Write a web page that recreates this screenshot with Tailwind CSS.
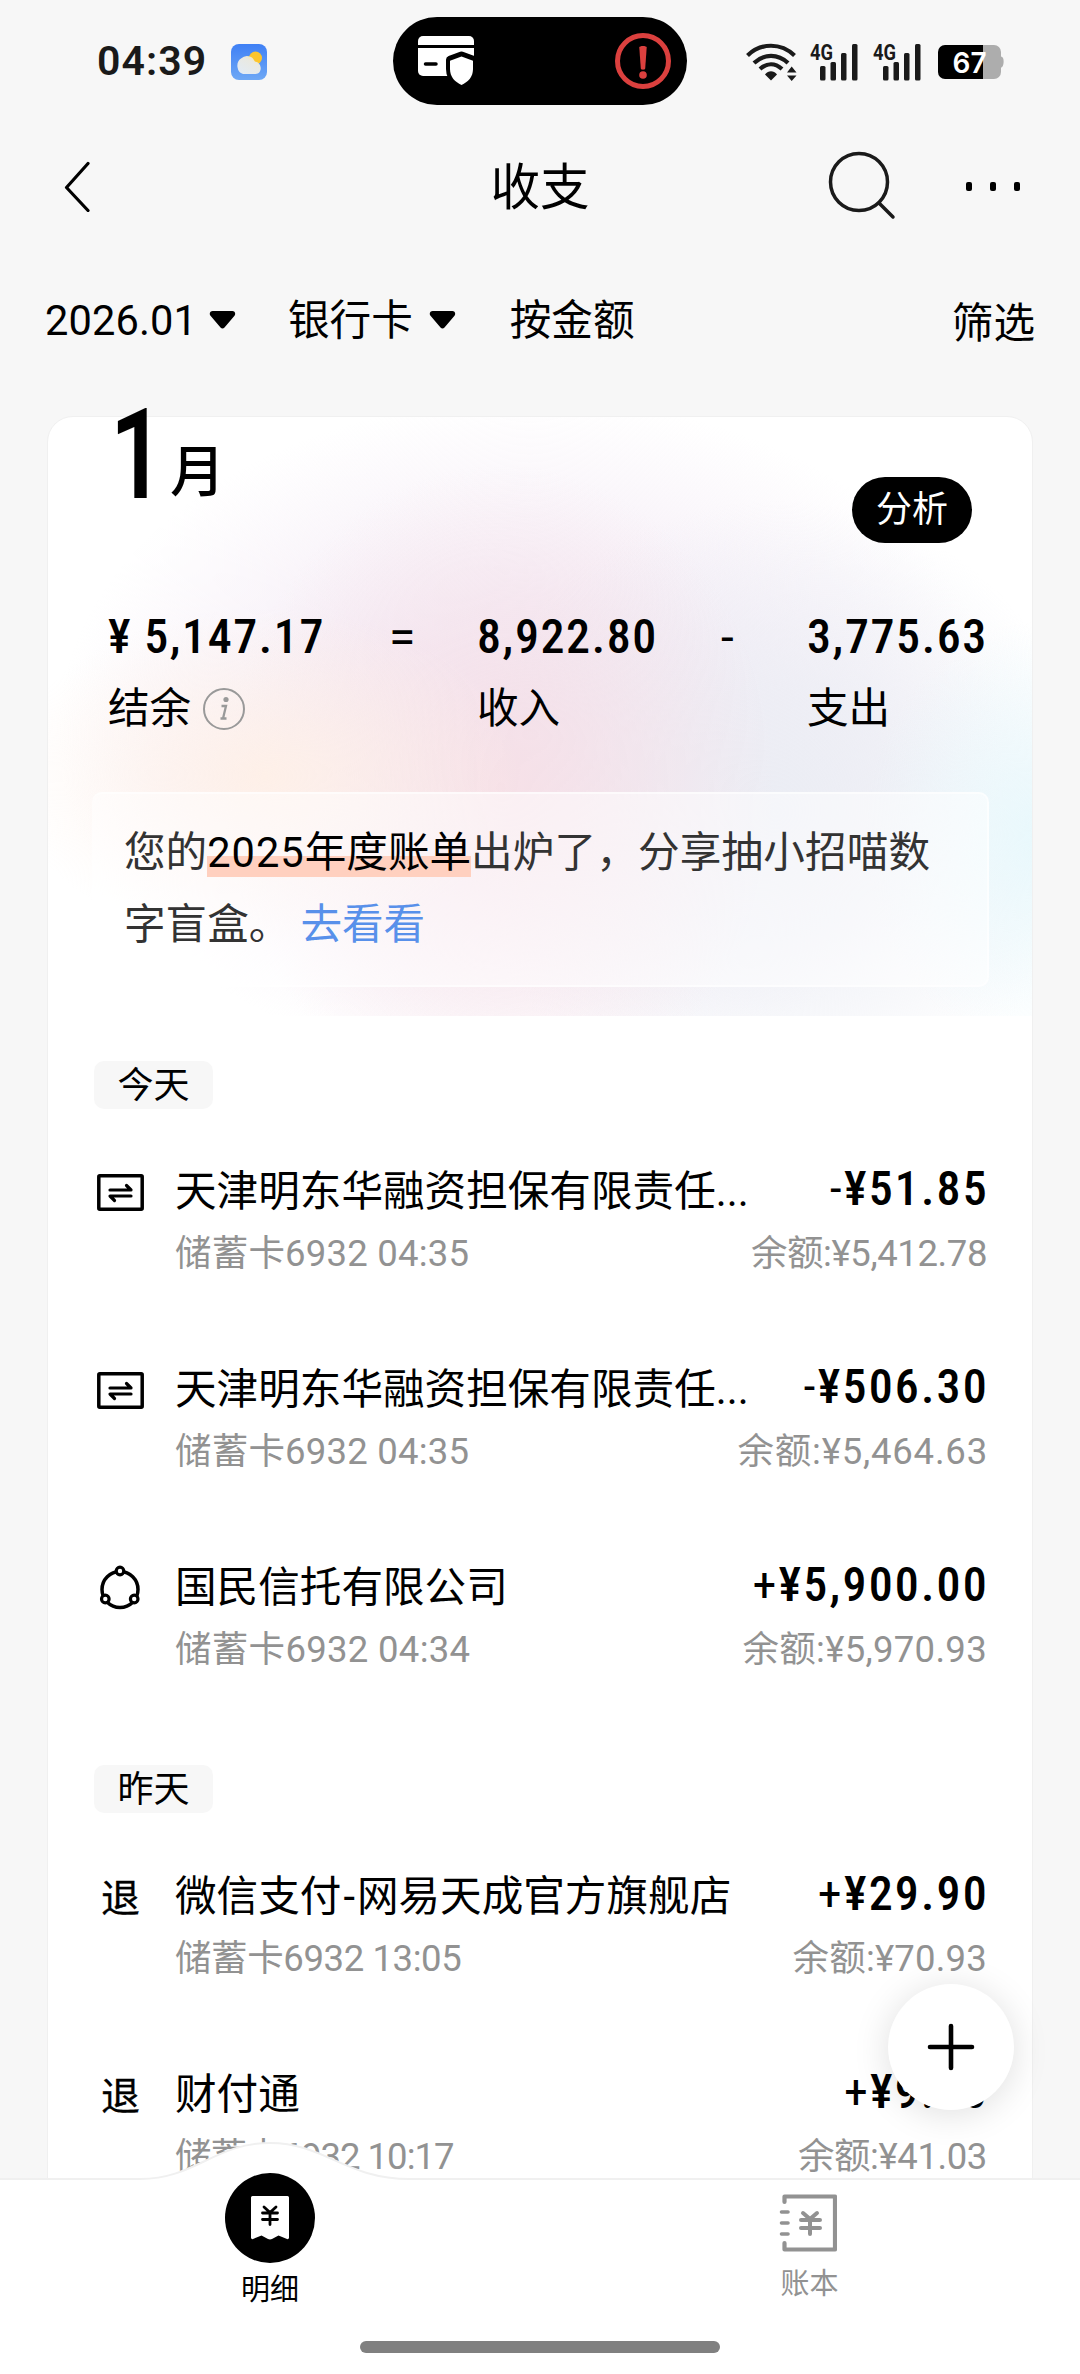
<!DOCTYPE html>
<html lang="zh-CN">
<head>
<meta charset="utf-8">
<title>收支</title>
<script src="https://cdn.jsdelivr.net/npm/@tailwindcss/browser@4"></script>
</head>
<body class="bg-[#f7f7f7]">
<div class="relative flex h-[2374px] w-[1080px] flex-col overflow-hidden bg-[#f7f7f7] font-['Roboto','Noto_Sans_CJK_SC',sans-serif] text-[41.6px] whitespace-nowrap text-black">

  <!-- Status bar -->
  <header class="relative flex h-[124px] shrink-0 items-center pr-[76px] pl-[97px]">
    <span class="w-[134px] pb-[3px] text-[41px] leading-[46px] font-semibold tracking-[1.1px] text-[#1a1a1a]">04:39</span>
    <svg class="h-9 w-9" viewBox="0 0 36 36">
      <defs>
        <linearGradient id="sky" x1="0" y1="0" x2="0" y2="1"><stop offset="0" stop-color="#3f80f5"/><stop offset="1" stop-color="#6ea8f5"/></linearGradient>
        <linearGradient id="cloud" x1="1" y1="0" x2="0.3" y2="1"><stop offset="0" stop-color="#fbe79a"/><stop offset="0.4" stop-color="#e9e9e2"/><stop offset="1" stop-color="#e3ebf3"/></linearGradient>
      </defs>
      <rect width="36" height="36" rx="8" fill="url(#sky)"/>
      <circle cx="24.500" cy="14" r="6.500" fill="#fcc52c"/>
      <path d="M12 30a7.500 8.500 0 0 1-2-15.500 9 9 0 0 1 10-1.500c3 1.500 3 4 4.500 4.800 7 1.200 7 12.200 0 12.200z" fill="url(#cloud)"/>
    </svg>

    <div class="absolute top-[17px] left-[393px] flex h-[88px] w-[294px] items-center justify-between rounded-full bg-black pr-[15px] pl-[25px]">
      <svg class="h-[50px] w-[57px]" viewBox="0 0 57 50">
        <path d="M5 0H51a5 5 0 0 1 5 5V9H0V5A5 5 0 0 1 5 0z" fill="#fff"/>
        <path d="M0 12H56V35a5 5 0 0 1-5 5H5a5 5 0 0 1-5-5z" fill="#fff"/>
        <path d="M7.500 28H18" stroke="#000" stroke-width="3.500" stroke-linecap="round"/>
        <path d="M43.500 19.500 55 23.800V33c0 8-5 13-11.500 16C37 46 32 41 32 33V23.800z" fill="#fff" stroke="#000" stroke-width="8" stroke-linejoin="round"/>
        <path d="M43.500 20.500 55 24.800V33c0 8-5 13-11.500 16C37 46 32 41 32 33V24.800z" fill="#fff"/>
      </svg>
      <svg class="h-[58px] w-[58px]" viewBox="0 0 58 58">
        <circle cx="29" cy="29" r="25.500" fill="none" stroke="#db403e" stroke-width="5"/>
        <path d="M25.300 15.500c0-2 7.400-2 7.400 0L31.200 36.500c-.2 1.600-4.200 1.600-4.400 0z" fill="#db403e"/>
        <circle cx="29" cy="43" r="3.800" fill="#db403e"/>
      </svg>
    </div>

    <div class="ml-auto flex items-center text-[#1a1a1a]">
      <svg class="h-[38px] w-[51px]" viewBox="0 0 51 38" fill="none" stroke="currentColor" stroke-width="4.200">
        <path d="M1.500 12.500C15-.5 35-.5 48.500 12.500"/>
        <path d="M8 20C18 10.500 32 10.500 42 20"/>
        <path d="M14 26C21 19.700 29 19.700 36 26"/>
        <path d="M19 31.500C22.500 27.300 27.500 27.300 31 31.500L25 37.500z" fill="currentColor" stroke="none"/>
        <path d="M41 29.500 45.700 23.500 50.500 29.500zM41 32.500 45.700 38 50.500 32.500z" fill="currentColor" stroke="none"/>
      </svg>
      <svg class="ml-[13px] h-[38px] w-[49px] overflow-visible" viewBox="0 0 49 38" fill="currentColor">
        <text x="0" y="16.500" font-family="Roboto" font-weight="700" font-size="22" textLength="23" lengthAdjust="spacingAndGlyphs">4G</text>
        <rect x="10" y="23" width="5.500" height="14.500" rx="1.500"/><rect x="20.500" y="19" width="5.500" height="18.500" rx="1.500"/><rect x="31" y="10" width="5.500" height="27.500" rx="1.500"/><rect x="42" y="1" width="5.500" height="36.500" rx="1.500"/>
      </svg>
      <svg class="ml-[14px] h-[38px] w-[49px] overflow-visible" viewBox="0 0 49 38" fill="currentColor">
        <text x="0" y="16.500" font-family="Roboto" font-weight="700" font-size="22" textLength="23" lengthAdjust="spacingAndGlyphs">4G</text>
        <rect x="10" y="23" width="5.500" height="14.500" rx="1.500"/><rect x="20.500" y="19" width="5.500" height="18.500" rx="1.500"/><rect x="31" y="10" width="5.500" height="27.500" rx="1.500"/><rect x="42" y="1" width="5.500" height="36.500" rx="1.500"/>
      </svg>
      <svg class="ml-[16px] h-[34px] w-[66px]" viewBox="0 0 66 34">
        <path d="M45 0H56a7 7 0 0 1 7 7v4.500c4 0 3 11 0 11V27a7 7 0 0 1-7 7H45z" fill="#adadad"/>
        <path d="M7 0H45V34H7a7 7 0 0 1-7-7V7A7 7 0 0 1 7 0z" fill="#000"/>
        <text x="14.500" y="27.500" font-family="Inter" font-weight="600" font-size="29" textLength="34" lengthAdjust="spacingAndGlyphs" fill="#fff">67</text>
      </svg>
    </div>
  </header>

  <!-- Title bar -->
  <nav class="grid h-[124px] shrink-0 grid-cols-[1fr_auto_1fr] items-center pr-[60px] pl-[60px]">
    <svg class="ml-[3px] h-[52px] w-[28px]" viewBox="0 0 28 52" fill="none" stroke="#000" stroke-width="3.200" stroke-linecap="round" stroke-linejoin="round"><path d="M25 4 3.500 28 25 51" transform="translate(0 -.5)"/></svg>
    <h1 class="pt-[3px] text-[49.500px] leading-[60px]">收支</h1>
    <div class="flex items-center justify-end gap-[70px]">
      <svg class="h-[70px] w-[68px]" viewBox="0 0 68 70" fill="none" stroke="#1a1a1a" stroke-width="3.500" stroke-linecap="round"><circle cx="31" cy="31" r="28.500"/><path d="M51 52 65 66"/></svg>
      <div class="flex gap-[18px]"><i class="h-[9px] w-[6px] rounded-[2px] bg-black"></i><i class="h-[9px] w-[6px] rounded-[2px] bg-black"></i><i class="h-[9px] w-[6px] rounded-[2px] bg-black"></i></div>
    </div>
  </nav>

  <!-- Filters -->
  <div class="flex h-[144px] shrink-0 items-center pr-[45px] pl-[45px] leading-[56px]">
    <span class="pt-[2px] tracking-[0.1px]">2026.01</span>
    <svg class="ml-[12px] h-[20px] w-[27px]" viewBox="0 0 27 20"><path d="M3.500 1H23.500c2.500 0 3.500 3 2 4.700L15.500 17.500c-1.200 1.300-2.800 1.300-4 0L1.500 5.700C0 4 1 1 3.500 1z"/></svg>
    <span class="ml-[52px] pt-[2px]">银行卡</span>
    <svg class="ml-[16px] h-[20px] w-[27px]" viewBox="0 0 27 20"><path d="M3.500 1H23.500c2.500 0 3.500 3 2 4.700L15.500 17.500c-1.200 1.300-2.800 1.300-4 0L1.500 5.700C0 4 1 1 3.500 1z"/></svg>
    <span class="ml-[54px] pt-[2px]">按金额</span>
    <span class="ml-auto pt-[7px]">筛选</span>
  </div>

  <main class="mx-[47px] mt-[24px] flex h-[1900px] shrink-0 flex-col rounded-[26px] border border-[#f0f0f0] bg-white">
    <!-- Month summary -->
    <section class="flex h-[599px] shrink-0 flex-col rounded-t-[26px] bg-[radial-gradient(ellipse_18%_36%_at_101%_70%,#e8f8fc_0%,#e8f8fc00_100%),radial-gradient(ellipse_26%_28%_at_22%_60%,#fef0e8_0%,#fef0e800_100%),radial-gradient(ellipse_28%_54%_at_46%_62%,#f6e0e7_0%,#f6e0e700_100%),radial-gradient(ellipse_32%_52%_at_74%_66%,#ebedf4_0%,#ebedf4c0_40%,#ebedf400_100%),radial-gradient(ellipse_48%_56%_at_49%_53%,#f0e4f2_0%,#f0e4f2b0_40%,#f0e4f200_100%)]">
      <div class="flex h-[126px] items-start justify-between pr-[60px] pl-[62px]">
        <h2 class="-mt-[18px] flex items-start">
          <span class="w-[60px] origin-left scale-x-[0.76] text-[126px] leading-[112px] font-semibold">1</span>
          <span class="mt-[41px] text-[55px] leading-[64px] font-medium">月</span>
        </h2>
        <button class="mt-[60px] h-[66px] w-[120px] rounded-full bg-black text-[36px] leading-[67px] text-white">分析</button>
      </div>
      <div class="mt-[62px] grid h-[187px] grid-cols-[281px_88px_244px_86px_auto] content-start gap-y-[12px] pl-[60px]">
        <span class="text-[48px] leading-[64px] font-medium tracking-[1.600px] [font-stretch:85%]">¥<span class="ml-[12px]">5,147.17</span></span>
        <span class="text-[48px] leading-[64px]">=</span>
        <span class="text-[48px] leading-[64px] font-medium tracking-[1.600px] [font-stretch:85%]">8,922.80</span>
        <span class="text-[46px] leading-[64px]">-</span>
        <span class="text-[48px] leading-[64px] font-medium tracking-[1.600px] [font-stretch:85%]">3,775.63</span>
        <span class="flex items-center gap-3 leading-[56px]">结余
          <svg class="h-[42px] w-[42px]" viewBox="0 0 42 42" fill="none" stroke="#999" stroke-width="2"><circle cx="21" cy="21" r="20"/><circle cx="23" cy="11.500" r="2.600" fill="#999" stroke="none"/><path d="M18.500 18H23L20 30.500h3.500M17.500 30.500h4" stroke-width="2.300"/></svg>
        </span>
        <span></span>
        <span class="leading-[56px]">收入</span>
        <span></span>
        <span class="leading-[56px]">支出</span>
      </div>
      <p class="mr-[43px] ml-[44px] h-[195px] rounded-[10px] border-2 border-l-0 border-white/60 bg-white/50 pt-[23px] pl-[32px] leading-[72px] text-[#333]">您的<span class="bg-[linear-gradient(#ffd0bf,#ffd0bf)] bg-[length:100%_21px] bg-[position:0_28px] bg-no-repeat text-black"><span class="tracking-[1px]">2025</span>年度账单</span><span class="tracking-[0.15px]">出炉了，分享抽小招喵数</span><br>字盲盒。<a class="ml-[10px] text-[#5890ea]">去看看</a></p>
    </section>

    <!-- Today -->
    <div class="mt-[45px] ml-[46px] h-[48px] w-[119px] shrink-0 rounded-[10px] bg-[#f7f7f7] text-center text-[36px] leading-[50px]">今天</div>
    <div class="mt-[55px] flex flex-col pr-[45px] pl-[49px]">
      <article class="flex h-[198px]">
        <svg class="mt-[10px] h-[37px] w-[47px] shrink-0" viewBox="0 0 47 37" fill="none" stroke="#000" stroke-width="3.500" stroke-linecap="round" stroke-linejoin="round"><rect x="1.800" y="1.800" width="43.400" height="33.400" rx="1"/><path d="M13 16H34L29.500 11.500M34 22H13L17.500 26.500" stroke-width="3.200"/></svg>
        <div class="ml-[31px] flex w-[576px] shrink-0 flex-col gap-[10px]"><h3 class="leading-[56px]">天津明东华融资担保有限责任...</h3><p class="text-[36.500px] leading-[48px] tracking-[0.2px] text-[#929292]">储蓄卡6932 04:35</p></div>
        <div class="ml-auto flex w-0 flex-col items-end gap-[17px]"><b class="-mr-[2px] text-[48px] leading-[49px] font-medium tracking-[2.200px] [font-stretch:85%]"><span class="font-normal">-</span>¥51.85</b><p class="text-[36.500px] leading-[48px] tracking-[-0.4px] text-[#929292]">余额:¥5,412.78</p></div>
      </article>
      <article class="flex h-[198px]">
        <svg class="mt-[10px] h-[37px] w-[47px] shrink-0" viewBox="0 0 47 37" fill="none" stroke="#000" stroke-width="3.500" stroke-linecap="round" stroke-linejoin="round"><rect x="1.800" y="1.800" width="43.400" height="33.400" rx="1"/><path d="M13 16H34L29.500 11.500M34 22H13L17.500 26.500" stroke-width="3.200"/></svg>
        <div class="ml-[31px] flex w-[576px] shrink-0 flex-col gap-[10px]"><h3 class="leading-[56px]">天津明东华融资担保有限责任...</h3><p class="text-[36.500px] leading-[48px] tracking-[0.2px] text-[#929292]">储蓄卡6932 04:35</p></div>
        <div class="ml-auto flex w-0 flex-col items-end gap-[17px]"><b class="-mr-[2px] text-[48px] leading-[49px] font-medium tracking-[2.200px] [font-stretch:85%]"><span class="font-normal">-</span>¥506.30</b><p class="-mr-[1px] text-[36.500px] leading-[48px] tracking-[0.8px] text-[#929292]">余额:¥5,464.63</p></div>
      </article>
      <article class="flex h-[198px]">
        <svg class="mt-[4px] h-[48px] w-[47px] shrink-0" viewBox="0 0 47 48" fill="none" stroke="#000" stroke-width="3.500"><circle cx="23" cy="25.500" r="18"/><g fill="#fff" stroke-width="3.200"><circle cx="23" cy="7" r="3.800"/><circle cx="8.300" cy="35" r="3.800"/><circle cx="37.200" cy="35" r="3.800"/></g></svg>
        <div class="ml-[31px] flex flex-col gap-[10px]"><h3 class="leading-[56px]">国民信托有限公司</h3><p class="text-[36.500px] leading-[48px] tracking-[0.3px] text-[#929292]">储蓄卡6932 04:34</p></div>
        <div class="ml-auto flex flex-col items-end gap-[17px]"><b class="-mr-[2px] text-[48px] leading-[49px] font-medium tracking-[2.200px] [font-stretch:85%]"><span class="font-normal">+</span>¥5,900.00</b><p class="text-[36.500px] leading-[48px] tracking-[0.3px] text-[#929292]">余额:¥5,970.93</p></div>
      </article>
    </div>

    <!-- Yesterday -->
    <div class="mt-[7px] ml-[46px] h-[48px] w-[119px] shrink-0 rounded-[10px] bg-[#f7f7f7] text-center text-[36px] leading-[50px]">昨天</div>
    <div class="mt-[56px] flex flex-col pr-[45px] pl-[49px]">
      <article class="flex h-[198px]">
        <span class="w-[47px] text-center text-[39px] leading-[60px] [-webkit-text-stroke:0.3px_#000]">退</span>
        <div class="ml-[31px] flex flex-col gap-[10px]"><h3 class="leading-[56px]">微信支付<span class="mx-[2px]">-</span>网易天成官方旗舰店</h3><p class="text-[36.500px] leading-[48px] tracking-[-0.4px] text-[#929292]">储蓄卡6932 13:05</p></div>
        <div class="ml-auto flex flex-col items-end gap-[17px]"><b class="-mr-[2px] text-[48px] leading-[49px] font-medium tracking-[2.200px] [font-stretch:85%]"><span class="font-normal">+</span>¥29.90</b><p class="text-[36.500px] leading-[48px] tracking-[0.2px] text-[#929292]">余额:¥70.93</p></div>
      </article>
      <article class="flex h-[198px]">
        <span class="w-[47px] text-center text-[39px] leading-[60px] [-webkit-text-stroke:0.3px_#000]">退</span>
        <div class="ml-[31px] flex flex-col gap-[10px]"><h3 class="leading-[56px]">财付通</h3><p class="text-[36.500px] leading-[48px] tracking-[-1px] text-[#929292]">储蓄卡6932 10:17</p></div>
        <div class="ml-auto flex flex-col items-end gap-[17px]"><b class="-mr-[2px] text-[48px] leading-[49px] font-medium tracking-[2.200px] [font-stretch:85%]"><span class="font-normal">+</span>¥9.90</b><p class="text-[36.500px] leading-[48px] tracking-[-0.4px] text-[#929292]">余额:¥41.03</p></div>
      </article>
    </div>
  </main>

  <!-- Add button -->
  <button class="absolute top-[1984px] left-[888px] flex h-[126px] w-[126px] items-center justify-center rounded-full bg-white shadow-[0_4px_36px_rgba(0,0,0,0.13)]">
    <svg class="h-[48px] w-[48px]" viewBox="0 0 48 48" stroke="#000" stroke-width="4.600" stroke-linecap="round"><path d="M24 3V45M3 24H45"/></svg>
  </button>

  <!-- Tab bar -->
  <footer class="absolute inset-x-0 bottom-0 h-[232px]">
    <svg class="absolute inset-0 h-[232px] w-[1080px]" viewBox="0 0 1080 232"><path d="M-2 37H140C195 37 215 1 270 1S345 37 410 37H1082V234H-2z" fill="#fff" stroke="#f0f0f0" stroke-width="2"/></svg>
    <div class="relative grid grid-cols-2 text-[29px] leading-[36px]">
      <a class="flex flex-col items-center pt-[31px]">
        <span class="flex h-[90px] w-[90px] items-center justify-center rounded-full bg-black">
          <svg class="h-[44px] w-[40px]" viewBox="0 0 40 44"><path d="M2.500 0H37.500a1.500 1.500 0 0 1 1.500 1.500V42q-.5 1.500-2 1L28.500 39.500 22 43q-2 .8-4 0L11.500 39.500 3 43q-1.500.5-2-1V1.500A1.500 1.500 0 0 1 2.500 0z" fill="#fff"/><path d="M14 11 20 16.500 26 11M20 16.500V28.500M12.500 17H27.500M12.500 23.500H27.500" fill="none" stroke="#000" stroke-width="2.800" stroke-linecap="round"/></svg>
        </span>
        <span class="mt-[9px]">明细</span>
      </a>
      <a class="flex flex-col items-center pt-[52px] text-[#929292]">
        <svg class="mr-[4px] h-[58px] w-[58px]" viewBox="0 0 58 58" fill="none" stroke="#929292" stroke-width="4.200" stroke-linecap="round"><path d="M5.500 8V2.500H56V55.500H5.500V49" stroke-linejoin="round"/><path d="M2.500 18H9M2.500 29H9M2.500 40H9" stroke-width="3.600"/><path d="M24 19 31 25 38 19M31 25V40M22 26H41M22 34H41" stroke-width="4"/></svg>
        <span class="mt-[14px] mr-[1px]">账本</span>
      </a>
    </div>
    <div class="absolute bottom-[21px] left-[360px] h-[12px] w-[360px] rounded-full bg-[#808080]"></div>
  </footer>
</div>
</body>
</html>
